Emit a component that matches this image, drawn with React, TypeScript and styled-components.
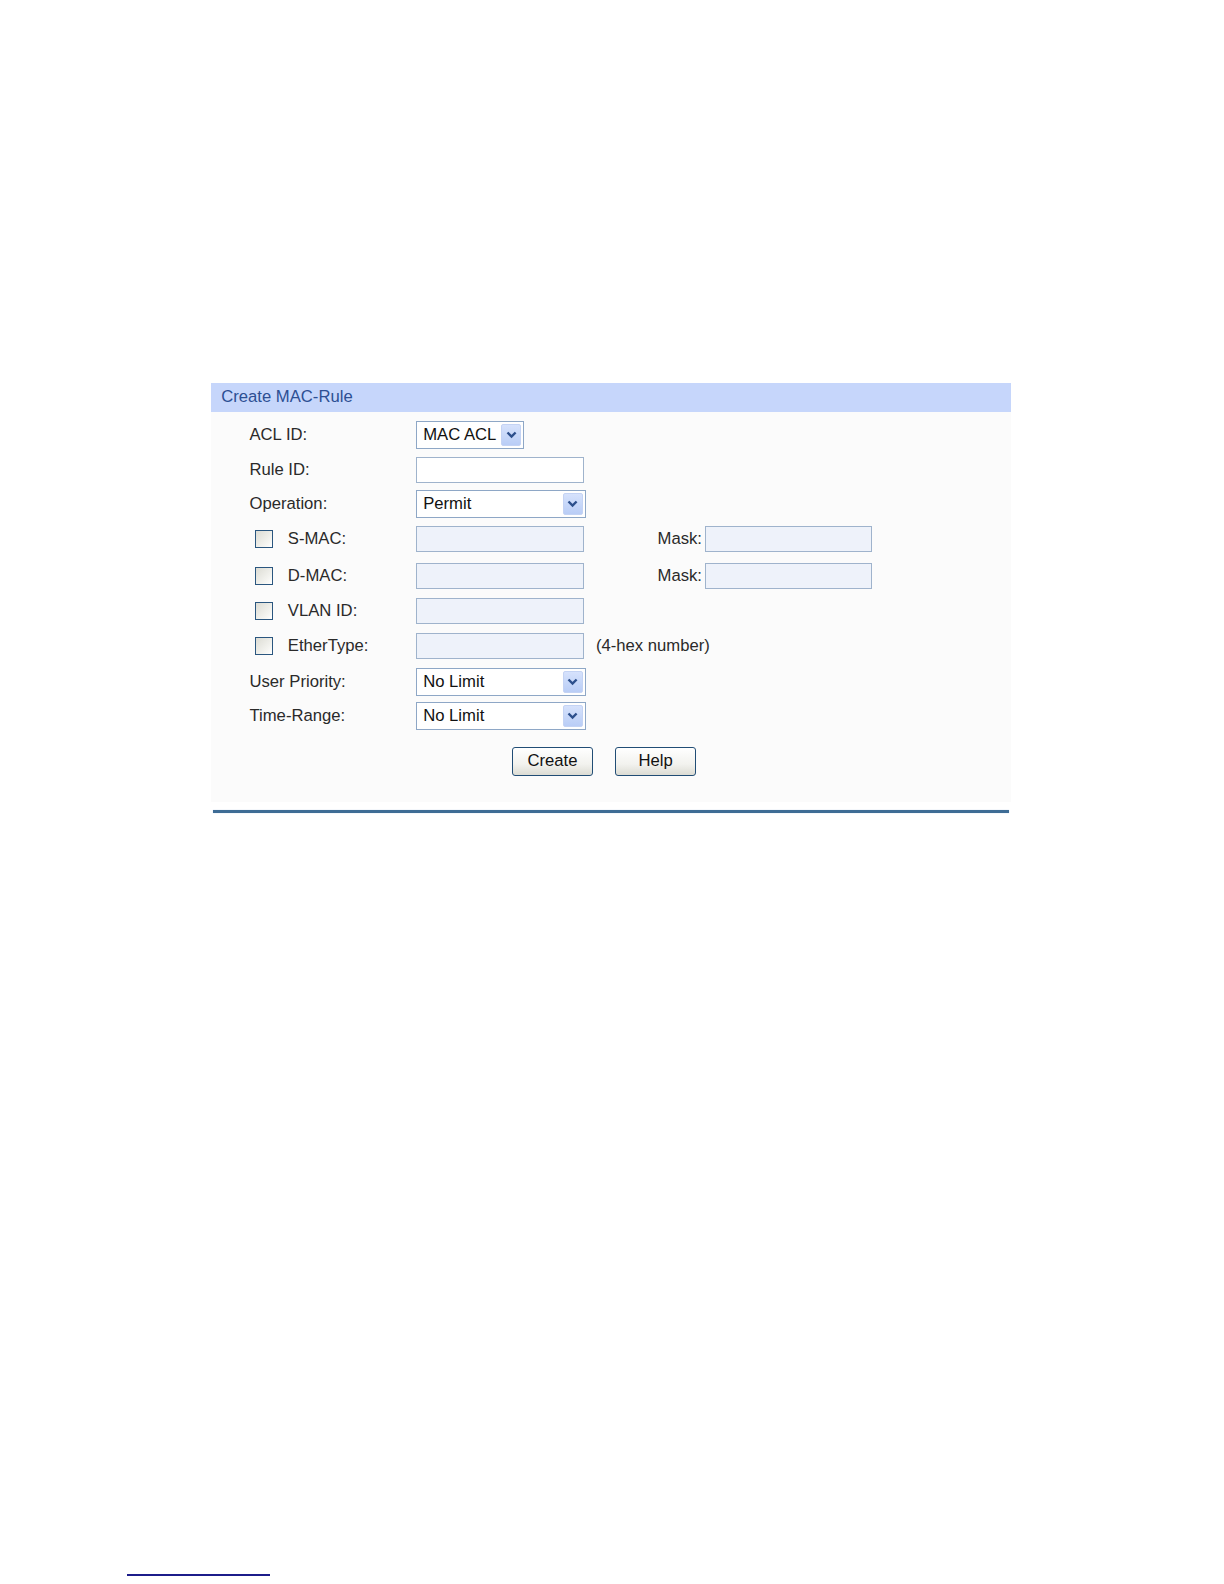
import styled, { createGlobalStyle } from "styled-components";

const GlobalStyle = createGlobalStyle`
    html, body {
        margin: 0;
        background: #ffffff;
        font-family: "Liberation Sans", Arial, sans-serif;
    }
`;

// the photograph comes out about 1% smaller than laid out, so the page is zoomed to compensate
const Page = styled.div`
    zoom: 1.0101;
    min-height: 1562px;
    display: flex;
    flex-direction: column;
    padding-top: 379px;
    box-sizing: border-box;
`;

const Panel = styled.div`
    margin-left: 209px;
    width: 792px;
    display: flex;
    flex-direction: column;
`;

const PanelHeader = styled.div`
    height: 29px;
    background: #c6d6fb;
    display: flex;
    align-items: center;
    padding-left: 10px;
    font-size: 16.5px;
    color: #2d4f93;
`;

const PanelBody = styled.div`
    background: #fbfbfb;
    padding: 6px 0 12px 38px;
    display: flex;
    flex-direction: column;
`;

const Row = styled.div<{ $h: number }>`
    height: ${(p) => p.$h}px;
    display: flex;
    align-items: center;
    font-size: 16.5px;
    color: #2a2a2a;
`;

const Label = styled.div`
    width: 165px;
    flex-shrink: 0;
`;

const CheckLabel = styled.label`
    width: 165px;
    flex-shrink: 0;
    display: flex;
    align-items: center;
    gap: 15px;
    padding-left: 5px;
    box-sizing: border-box;
`;

const Check = styled.span`
    width: 18px;
    height: 18px;
    box-sizing: border-box;
    border: 1px solid #2a567f;
    background: linear-gradient(135deg, #dcdcd4 0%, #f4f4f0 70%, #ffffff 100%);
`;

const TextInput = styled.div<{ $disabled?: boolean; $w?: number }>`
    width: ${(p) => p.$w ?? 166}px;
    height: 26px;
    box-sizing: border-box;
    border: 1px solid #9fb3cc;
    background: ${(p) => (p.$disabled ? "#eef2fa" : "#ffffff")};
`;

const Select = styled.div<{ $w: number }>`
    width: ${(p) => p.$w}px;
    height: 28px;
    box-sizing: border-box;
    border: 1px solid #8ea7c6;
    background: #ffffff;
    display: flex;
    align-items: center;
    justify-content: space-between;
    padding: 0 2px 0 6px;
    font-size: 16.5px;
    color: #111;
`;

const Arrow = styled.span`
    width: 20px;
    height: 22px;
    border-radius: 2px;
    background: linear-gradient(180deg, #d6e2fc 0%, #b9cdf6 100%);
    border: 1px solid #c4d3f4;
    box-sizing: border-box;
    display: flex;
    align-items: center;
    justify-content: center;
`;

const MaskLabel = styled.div`
    width: 120px;
    text-align: right;
    padding-right: 3px;
    box-sizing: border-box;
`;

const Note = styled.div`
    margin-left: 12px;
`;

const ButtonRow = styled.div`
    display: flex;
    gap: 22px;
    padding: 14px 0 0 260px;
    height: 56px;
    box-sizing: border-box;
`;

const Button = styled.button`
    width: 80px;
    height: 28px;
    border: 1px solid #214d75;
    border-radius: 3px;
    background: linear-gradient(180deg, #ffffff 0%, #f2f2ee 60%, #dcdcd4 100%);
    font-family: "Liberation Sans", Arial, sans-serif;
    font-size: 16.5px;
    color: #111;
    padding: 0;
`;

const BottomLine = styled.div`
    margin: 8px 0 0 2px;
    width: 788px;
    height: 3px;
    background: #3e6c95;
    box-shadow: 0 0 1px #8fb4d6;
`;

const Footer = styled.div`
    margin-top: auto;
    margin-left: 126px;
    margin-bottom: 2px;
    width: 141px;
    height: 2px;
    background: #1c1c8a;
`;

function Chevron() {
    return (
        <svg width="11" height="8" viewBox="0 0 11 8">
            <path d="M1.5 1.5 L5.5 5.5 L9.5 1.5" stroke="#2c4f8c" strokeWidth="2.4" fill="none" />
        </svg>
    );
}

function Dropdown({ value, width }: { value: string; width: number }) {
    return (
        <Select $w={width}>
            <span>{value}</span>
            <Arrow>
                <Chevron />
            </Arrow>
        </Select>
    );
}

function App() {
    return (
        <>
            <GlobalStyle />
            <Page>
                <Panel>
                    <PanelHeader>Create MAC-Rule</PanelHeader>
                    <PanelBody>
                        <Row $h={34}>
                            <Label>ACL ID:</Label>
                            <Dropdown value="MAC ACL" width={107} />
                        </Row>
                        <Row $h={34}>
                            <Label>Rule ID:</Label>
                            <TextInput />
                        </Row>
                        <Row $h={34}>
                            <Label>Operation:</Label>
                            <Dropdown value="Permit" width={168} />
                        </Row>
                        <Row $h={36}>
                            <CheckLabel>
                                <Check />
                                S-MAC:
                            </CheckLabel>
                            <TextInput $disabled />
                            <MaskLabel>Mask:</MaskLabel>
                            <TextInput $disabled $w={165} />
                        </Row>
                        <Row $h={36}>
                            <CheckLabel>
                                <Check />
                                D-MAC:
                            </CheckLabel>
                            <TextInput $disabled />
                            <MaskLabel>Mask:</MaskLabel>
                            <TextInput $disabled $w={165} />
                        </Row>
                        <Row $h={34}>
                            <CheckLabel>
                                <Check />
                                VLAN ID:
                            </CheckLabel>
                            <TextInput $disabled />
                        </Row>
                        <Row $h={36}>
                            <CheckLabel>
                                <Check />
                                EtherType:
                            </CheckLabel>
                            <TextInput $disabled />
                            <Note>(4-hex number)</Note>
                        </Row>
                        <Row $h={34}>
                            <Label>User Priority:</Label>
                            <Dropdown value="No Limit" width={168} />
                        </Row>
                        <Row $h={34}>
                            <Label>Time-Range:</Label>
                            <Dropdown value="No Limit" width={168} />
                        </Row>
                        <ButtonRow>
                            <Button>Create</Button>
                            <Button>Help</Button>
                        </ButtonRow>
                    </PanelBody>
                    <BottomLine />
                </Panel>
                <Footer />
            </Page>
        </>
    );
}

export default App;
